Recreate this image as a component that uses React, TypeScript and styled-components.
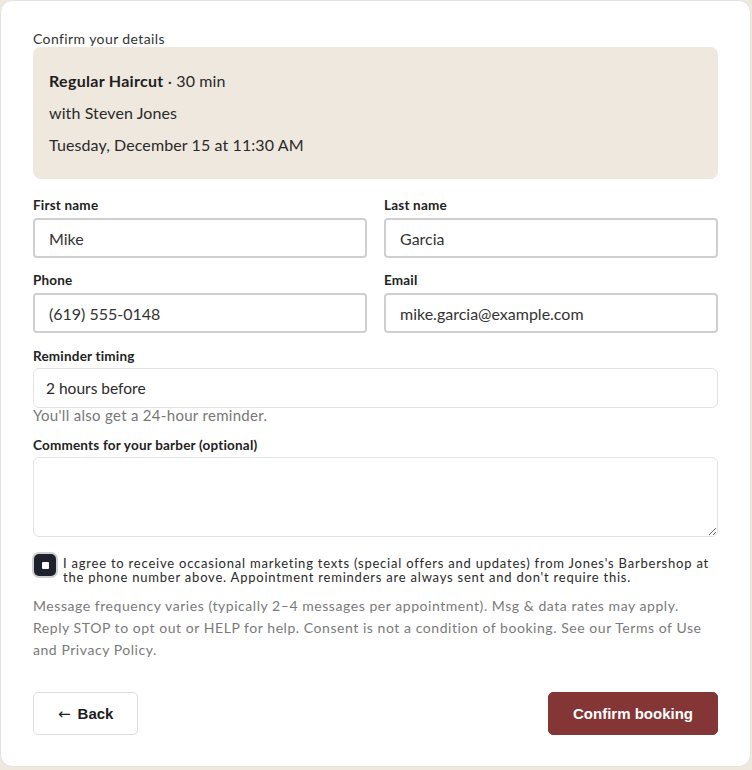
import React from "react";
import styled, { createGlobalStyle } from "styled-components";

const GlobalStyle = createGlobalStyle`
  html, body {
    margin: 0;
    padding: 0;
    background: #efe8df;
  }
  body {
    font-family: Lato, "Open Sans", sans-serif;
    color: #222;
  }
  * { box-sizing: border-box; }
`;

const Card = styled.div`
  width: 751px;
  height: 767px;
  background: #fff;
  border: 1px solid #e6e2dc;
  border-radius: 12px;
  padding: 30px 32px 0 32px;
  display: flex;
  flex-direction: column;
`;

const Heading = styled.div`
  font-size: 14px;
  letter-spacing: 0.4px;
  color: #333;
  line-height: 16px;
`;

const Summary = styled.div`
  background: #efe8df;
  border-radius: 8px;
  padding: 18px 16px;
  display: flex;
  flex-direction: column;
  margin-bottom: 18px;
`;

const SummaryLine = styled.div`
  font-size: 16px;
  line-height: 32px;
  letter-spacing: 0.1px;
  color: #2a2a2a;
  b { font-weight: 700; color: #1d1d1d; letter-spacing: 0.3px; }
`;

const Grid = styled.div`
  display: grid;
  grid-template-columns: 1fr 1fr;
  column-gap: 17px;
  row-gap: 14px;
  margin-bottom: 15px;
`;

const Field = styled.div`
  display: flex;
  flex-direction: column;
`;

const Label = styled.label`
  font-size: 13.5px;
  letter-spacing: 0.2px;
  font-weight: 700;
  color: #222;
  line-height: 16px;
  margin-bottom: 5px;
`;

const TextInput = styled.input`
  height: 40px;
  border: 2px solid #cfcfcf;
  border-radius: 4px;
  padding: 0 14px;
  font-family: inherit;
  font-size: 16px;
  color: #333;
  outline: none;
`;

const Select = styled.div`
  height: 40px;
  margin-top: -1px;
  border: 1px solid #e3e3e3;
  border-radius: 6px;
  padding: 0 12px;
  display: flex;
  align-items: center;
  font-size: 15.5px;
  color: #2a2a2a;
`;

const Hint = styled.div`
  font-size: 15px;
  letter-spacing: 0.3px;
  color: #777;
  line-height: 15px;
  margin-bottom: 14px;
`;

const TextArea = styled.textarea`
  height: 80px;
  margin-top: -1px;
  border: 1px solid #e3e3e3;
  border-radius: 6px;
  font-family: inherit;
  resize: vertical;
  outline: none;
  margin-bottom: 16px;
`;

const ConsentRow = styled.label`
  display: flex;
  align-items: flex-start;
  gap: 7px;
  margin-bottom: 11px;
`;

const Check = styled.span`
  flex: none;
  width: 22px;
  height: 22px;
  border-radius: 5px;
  background: #1e222d;
  box-shadow: 0 0 0 2px #d0d0d0;
  display: flex;
  align-items: center;
  justify-content: center;
  margin-left: 1px;
  margin-top: 1px;
  &::after {
    content: "";
    width: 7px;
    height: 7px;
    border-radius: 1px;
    background: #fff;
  }
`;

const ConsentText = styled.span`
  font-size: 13px;
  letter-spacing: 0.78px;
  line-height: 14px;
  color: #2a2a2a;
  padding-top: 3px;
`;

const Fine = styled.p`
  margin: 0;
  font-size: 14px;
  letter-spacing: 0.55px;
  line-height: 22px;
  color: #7a7a7a;
`;

const Actions = styled.div`
  margin-top: 31px;
  display: flex;
  justify-content: space-between;
`;

const Button = styled.button<{ $primary?: boolean }>`
  height: 43px;
  padding: 0 24px;
  border-radius: 5px;
  font-family: "Liberation Sans", Arial, sans-serif;
  font-weight: 700;
  font-size: 15px;
  cursor: pointer;
  border: 1px solid ${(p) => (p.$primary ? "#843535" : "#dddddd")};
  background: ${(p) => (p.$primary ? "#843535" : "#fff")};
  color: ${(p) => (p.$primary ? "#fff" : "#1d1d1d")};
`;

const Arrow = styled.span`
  font-family: "DejaVu Sans", sans-serif;
  font-weight: 400;
  margin-right: 7px;
`;

export default function App() {
  return (
    <>
      <GlobalStyle />
      <Card>
        <Heading>Confirm your details</Heading>
        <Summary>
          <SummaryLine>
            <b>Regular Haircut</b> · 30 min
          </SummaryLine>
          <SummaryLine>with Steven Jones</SummaryLine>
          <SummaryLine>Tuesday, December 15 at 11:30 AM</SummaryLine>
        </Summary>
        <Grid>
          <Field>
            <Label>First name</Label>
            <TextInput defaultValue="Mike" />
          </Field>
          <Field>
            <Label>Last name</Label>
            <TextInput defaultValue="Garcia" />
          </Field>
          <Field>
            <Label>Phone</Label>
            <TextInput defaultValue="(619) 555-0148" />
          </Field>
          <Field>
            <Label>Email</Label>
            <TextInput defaultValue="mike.garcia@example.com" />
          </Field>
        </Grid>
        <Field>
          <Label>Reminder timing</Label>
          <Select>2 hours before</Select>
        </Field>
        <Hint>You'll also get a 24-hour reminder.</Hint>
        <Field>
          <Label>Comments for your barber (optional)</Label>
          <TextArea />
        </Field>
        <ConsentRow>
          <Check />
          <ConsentText>
            I agree to receive occasional marketing texts (special offers and updates) from Jones's Barbershop at
            the phone number above. Appointment reminders are always sent and don't require this.
          </ConsentText>
        </ConsentRow>
        <Fine>
          Message frequency varies (typically 2–4 messages per appointment). Msg &amp; data rates may apply.
          Reply STOP to opt out or HELP for help. Consent is not a condition of booking. See our Terms of Use
          and Privacy Policy.
        </Fine>
        <Actions>
          <Button>
            <Arrow>←</Arrow>Back
          </Button>
          <Button $primary>Confirm booking</Button>
        </Actions>
      </Card>
    </>
  );
}
